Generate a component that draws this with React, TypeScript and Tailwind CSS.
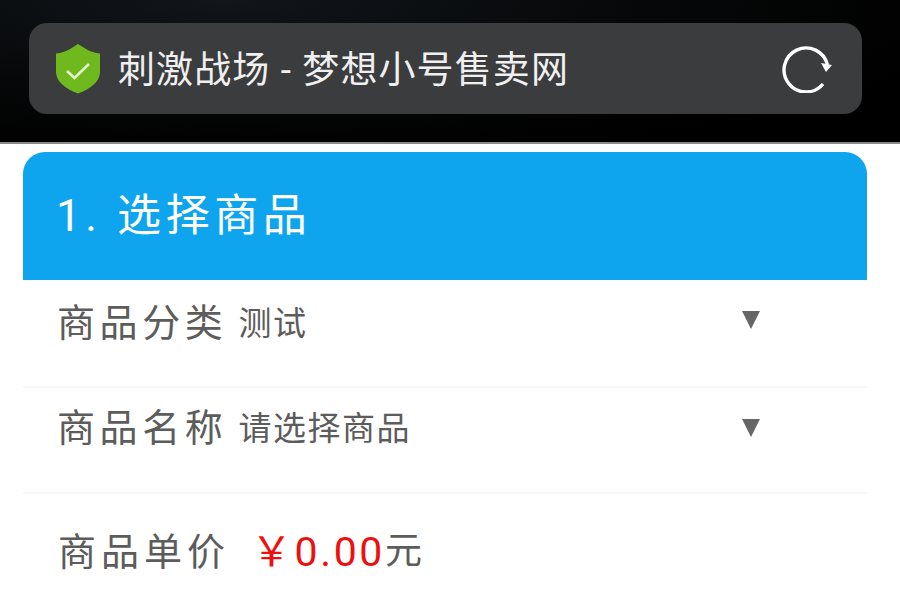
import React from 'react';

const CJK = "font-['Roboto','Noto_Sans_CJK_SC',sans-serif]";

function ShieldIcon() {
  return (
    <svg width="46" height="50" viewBox="0 0 46 50" className="shrink-0">
      <path d="M23 0 L31 5 C35 7.5 40 9 45 9.5 L45 28 C45 38 35 45 23 49.5 C11 45 1 38 1 28 L1 9.5 C6 9 11 7.5 15 5 Z" fill="#6fb81e" />
      <path d="M12 27 L19.5 34 L34 20" fill="none" stroke="#e3f3cc" strokeWidth="2.6" />
    </svg>
  );
}

function ReloadIcon() {
  return (
    <svg width="50" height="48" viewBox="0 0 50 48" className="shrink-0">
      <path d="M41 39 A22 22 0 1 1 45.5 20" fill="none" stroke="#ffffff" strokeWidth="3.4" />
      <path d="M39 18 L50 20 L44 27 Z" fill="#ffffff" />
    </svg>
  );
}

function SelectRow({ label, value, tall }: { label: string; value: string; tall?: boolean }) {
  return (
    <div className={`${tall ? 'h-[108px] pt-[18px]' : 'h-[106px] pt-[15px]'} flex items-start border-b-2 border-[#f7f7f7] pl-[34px] pr-[107px]`}>
      <span className="text-[38px] leading-[50px] tracking-[4.6px] text-[#5c5c5c]">{label}</span>
      <span className="ml-[11px] mt-[1px] text-[33px] leading-[50px] tracking-[1.5px] text-[#5c5c5c]">{value}</span>
      <span className={`${tall ? 'mt-[13px]' : 'mt-[16px]'} ml-auto h-0 w-0 border-x-[9px] border-t-[18px] border-x-transparent border-t-[#666666]`} />
    </div>
  );
}

export default function App() {
  return (
    <div className={`w-[900px] h-[600px] overflow-hidden bg-white ${CJK}`}>
      {/* Browser bar */}
      <div className="h-[144px] pl-[29px] pr-[38px] pt-[23px] bg-[radial-gradient(ellipse_at_25%_0%,#11161b_0%,#060708_45%,#000000_80%)] border-b-2 border-[#8a8a8a]">
        <div className="h-[91px] rounded-[18px] bg-[#3b3c3e] flex items-center pl-[26px] pr-[30px]">
          <ShieldIcon />
          <span className="ml-[17px] mt-[5px] text-[37px] leading-[50px] tracking-[1.1px] text-[#f0f0f0]">刺激战场 - 梦想小号售卖网</span>
          <span className="ml-auto">
            <ReloadIcon />
          </span>
        </div>
      </div>

      {/* Form card */}
      <div className="mx-[23px] mt-[8px] w-[844px]">
        <div className="h-[128px] rounded-t-[22px] bg-[#0ea5ee] flex items-center pl-[33px]">
          <span className="text-[44px] leading-[60px] tracking-[4.6px] text-white">1. 选择商品</span>
        </div>
        <SelectRow label="商品分类" value="测试" tall />
        <SelectRow label="商品名称" value="请选择商品" />
        <div className="flex items-start pl-[35px] pt-[33px]">
          <span className="text-[38px] leading-[50px] tracking-[5px] text-[#5c5c5c]">商品单价</span>
          <span className="ml-[21px] text-[41px] leading-[50px] tracking-[2.6px] text-[#ee0f0f]">￥0.00</span>
          <span className="text-[37px] leading-[50px] text-[#5c5c5c]">元</span>
        </div>
      </div>
    </div>
  );
}
